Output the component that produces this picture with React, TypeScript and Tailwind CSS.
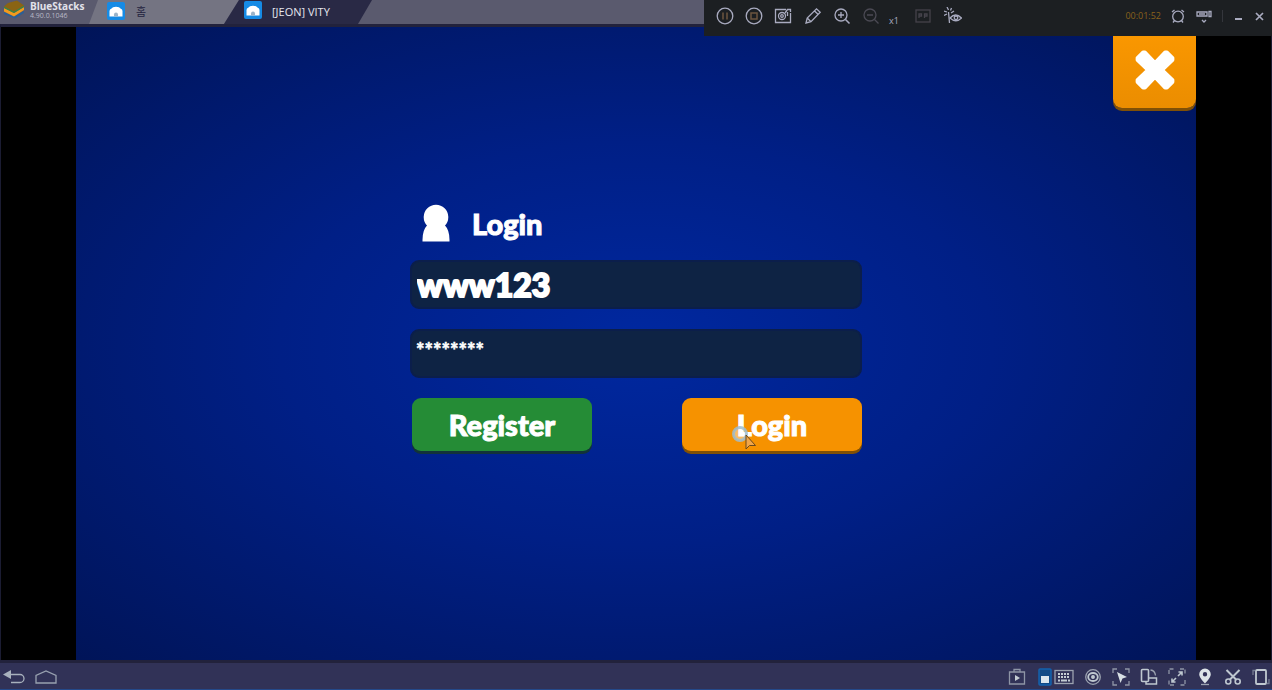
import React from "react";

type IconProps = { w: number; h: number; label: string; className?: string; children: React.ReactNode };

function Tool({ w, h, label, className = "", children }: IconProps) {
  return (
    <button type="button" aria-label={label} className={`flex shrink-0 items-center justify-center ${className}`}>
      <svg width={w} height={h} viewBox={`0 0 ${w} ${h}`} fill="none" stroke="currentColor" strokeWidth="1.3">
        {children}
      </svg>
    </button>
  );
}

function HomeBadge() {
  return (
    <svg width="18" height="18" viewBox="0 0 18 18" className="shrink-0">
      <rect width="18" height="18" rx="2" fill="#168be5" />
      <path d="M2.500 14.500V9Q2.500 7.200 4.500 6.500L6 5.200Q9 4.200 12 5.200L13.500 6.500q2 .7 2 2.500V14.500Z" fill="#fff" />
      <path d="M7 14.500v-2a2 2 0 0 1 4 0V14.500Z" fill="#9cb4c8" />
    </svg>
  );
}

function TitleBar() {
  return (
    <header className="flex h-6 bg-[#5a5a6e] font-['Open_Sans',sans-serif]">
      <div className="z-10 -mr-2 flex w-[97px] shrink-0 items-start">
        <svg width="30" height="20" viewBox="0 0 30 20" className="shrink-0">
          <path d="M4 12l10 4 10-5v2l-9 5.500L4 14Z" fill="#2b5f96" />
          <path d="M4 8l10 5 10-6v3l-10 6.500L4 11.500Z" fill="#f39a1d" />
          <path d="M4 6.500l10 5 10-6v1.500l-10 6L4 8Z" fill="#3a8a3d" />
          <path d="M4 6.500L8 3l9-2.500L24 5.500l-10 6Z" fill="#8a6414" />
        </svg>
        <div className="text-[#e2e2ea]">
          <div className="text-[10px] leading-[13px] font-bold">BlueStacks</div>
          <div className="text-[7px] leading-[6px] text-[#b9b9c6]">4.90.0.1046</div>
        </div>
      </div>
      <a href="#home" className="flex w-[150px] shrink-0 items-start gap-[11px] bg-[#747482] pt-[2px] pl-[18px] [clip-path:polygon(9px_0,100%_0,calc(100%-15px)_100%,0_100%)]">
        <HomeBadge />
        <span className="font-['Noto_Sans_CJK_KR',sans-serif] text-[11px] leading-[18px] text-[#23233f]">홈</span>
      </a>
      <a href="#vity" className="-ml-[15px] flex w-[148px] shrink-0 items-start gap-[10px] bg-[#292945] pt-[1px] pl-5 [clip-path:polygon(15px_0,100%_0,calc(100%-14px)_100%,0_100%)]">
        <HomeBadge />
        <span className="text-[11px] leading-[22px] whitespace-nowrap text-[#e6e6ee]">[JEON] VITY</span>
      </a>
    </header>
  );
}

function Recorder() {
  return (
    <div className="absolute top-0 right-0 flex h-9 w-[568px] items-center justify-between bg-[#1c1f22] pb-1 text-[#a9abc0]">
      <div className="flex items-center pl-[6px]">
        <Tool w={18} h={18} label="Pause" className="w-[29px]">
          <circle cx="9" cy="9" r="7.800" />
          <path d="M7 5.500v7M11 5.500v7" stroke="#6c553f" strokeWidth="1.500" />
        </Tool>
        <Tool w={18} h={18} label="Stop" className="w-[29px]">
          <circle cx="9" cy="9" r="7.800" />
          <rect x="6" y="6" width="6" height="6" stroke="#6c553f" strokeWidth="1.500" />
        </Tool>
        <Tool w={18} h={18} label="Capture" className="w-[30px]">
          <path d="M12 2.500H1.500v13h15V6" /><circle cx="8" cy="9" r="3.500" /><circle cx="8" cy="9" r="1.300" />
          <path d="M11 6l2.500-3.500h3V5M13.500 5v4" />
        </Tool>
        <Tool w={18} h={18} label="Draw" className="w-[29px]">
          <path d="M2 16l1.200-5L12.500 1.800l3.700 3.500L7 14.700ZM10.500 4l3.500 3.300M3.200 11l3.800 3.700" />
        </Tool>
        <Tool w={18} h={18} label="Zoom in" className="w-[29px]">
          <circle cx="8" cy="8" r="6" /><path d="M8 5v6M5 8h6" /><path d="M12.500 12.500l4 4" strokeWidth="1.600" />
        </Tool>
        <Tool w={18} h={18} label="Zoom out" className="w-[30px] text-[#4b4a54]">
          <circle cx="8" cy="8" r="6" /><path d="M5 8h6M12.500 12.500l4 4" />
        </Tool>
        <span className="w-[16px] pt-[10px] text-center font-['Open_Sans',sans-serif] text-[9px] leading-3">x1</span>
        <Tool w={16} h={14} label="Playback" className="w-[41px] text-[#45434b]">
          <rect x="1" y="1" width="14" height="12" /><path d="M4 9V5h2.500v2H4M9.500 9V5H12v2H9.500" />
        </Tool>
        <Tool w={18} h={18} label="Effects" className="w-[20px]">
          <path d="M4.500 5l1 11M0 4l3 1M3 0l1.500 3M7.500 1L6.500 3.500M0 8.500L3 7M7 6l3-2" />
          <path d="M6 11q5.500-6 11.500 0Q12 16.500 6 11Z" /><circle cx="12" cy="10.800" r="1.800" />
        </Tool>
      </div>
      <div className="flex items-center pr-2">
        <time className="mr-[10px] font-['Open_Sans',sans-serif] text-[9px] leading-4 text-[#8a621c]">00:01:52</time>
        <Tool w={14} h={14} label="Timer" className="w-[14px]">
          <circle cx="7" cy="7.500" r="5.300" /><path d="M1 3l2.500-2M13 3l-2.500-2M3.500 11.500L2 13.500M10.500 11.500L12 13.500" />
        </Tool>
        <Tool w={16} h={14} label="Webcam" className="ml-[11px] w-4">
          <path d="M1 3h10v4H1ZM3 5h6" /><path d="M13 2.500h2v5h-2Z" /><path d="M6 11l2 2 2-2" />
        </Tool>
        <span className="ml-[10px] h-3 w-px bg-[#34363c]" />
        <Tool w={8} h={12} label="Minimize" className="ml-[12px]"><path d="M0 9h7" strokeWidth="2" /></Tool>
        <Tool w={9} h={9} label="Close recorder" className="ml-[12px]"><path d="M1 1l7 7M8 1L1 8" strokeWidth="1.700" /></Tool>
      </div>
    </div>
  );
}

function LoginForm() {
  return (
    <form onSubmit={(e) => e.preventDefault()} className="w-[452px] font-['Lato',sans-serif] font-black text-white">
      <div className="flex h-[57px] items-start pt-px pl-3">
        <svg width="28" height="38" viewBox="0 0 28 38" fill="#fff">
          <path d="M5 21.500A12.300 12.300 0 1 1 23 21.500Q27.500 26 27.500 36V37.500H.5V36Q.5 26 5 21.500Z" />
        </svg>
        <h1 className="ml-[22px] pt-[2px] text-[29px] leading-9 [-webkit-text-stroke:1px_white]">Login</h1>
      </div>
      <input
        aria-label="Username"
        defaultValue="www123"
        className="mb-5 block h-[49px] w-full rounded-[9px] border-2 border-[#0b1e4b] bg-[#0e2344] px-[5px] text-[32px] leading-10 outline-none [-webkit-text-stroke:2px_white]"
      />
      <input
        aria-label="Password"
        defaultValue="********"
        className="mb-5 block h-[49px] w-full rounded-[9px] border-2 border-[#0b1e4b] bg-[#0e2344] px-1 pb-[6px] text-[20px] leading-5 outline-none [-webkit-text-stroke:0.5px_white]"
      />
      <div className="flex justify-between pl-[2px]">
        <button type="submit" name="register" className="h-[53px] w-[180px] rounded-[9px] bg-[#258c36] pt-[2px] text-[29px] leading-9 shadow-[0_3px_0_#12333a] [-webkit-text-stroke:1px_white]">
          Register
        </button>
        <button type="submit" name="login" className="relative h-[53px] w-[180px] rounded-[9px] bg-[#f69200] pt-[2px] text-[29px] leading-9 shadow-[0_3px_0_#805006] [-webkit-text-stroke:1px_white]">
          Login
          <svg width="26" height="26" viewBox="0 0 26 26" className="absolute top-[27px] left-[49px]">
            <circle cx="9" cy="9" r="6.500" fill="#fff" fillOpacity=".4" stroke="#9dbdd0" strokeOpacity=".85" strokeWidth="3" />
            <path d="M15 10v14l3.500-3.500 6 0Z" fill="#f1a64a" stroke="#6b4a1c" strokeWidth="1" />
          </svg>
        </button>
      </div>
    </form>
  );
}

function BottomBar() {
  return (
    <footer className="flex h-[30px] items-center justify-between border-t-[3px] border-b border-t-[#22223c] border-b-[#24498a] bg-[#313257] pt-[2px] text-[#bfc8d0]">
      <div className="flex items-center gap-[10px] pl-[3px]">
        <Tool w={22} h={14} label="Back" className="text-[#a8b1bd]">
          <path d="M7 4.500h10a4 4 0 0 1 0 8H8" /><path d="M0 4.500L8 0v9Z" fill="currentColor" stroke="none" />
        </Tool>
        <Tool w={22} h={14} label="Home" className="text-[#98a1b0]"><path d="M1 13V5.500L11 1l10 4.500V13Z" /></Tool>
      </div>
      <div className="flex items-center pr-[2px]">
        <Tool w={18} h={18} label="Media manager" className="mr-[12px] text-[#8e95a6]">
          <path d="M1.500 4h15v12h-15ZM6 4V1.500h6V4" /><path d="M7 7l5 3-5 3Z" fill="#c4ccd3" stroke="none" />
        </Tool>
        <Tool w={14} h={18} label="Input mode">
          <rect x="1" y="1" width="12" height="16" rx="1" fill="#124a86" stroke="#1561ad" strokeWidth="1.500" />
          <path d="M3 8h8v7H3Z" fill="#dce6ed" stroke="none" />
        </Tool>
        <Tool w={20} h={16} label="Keyboard" className="mr-[5px] ml-[2px] text-[#9ba2b0]">
          <rect x="1" y="1.500" width="18" height="13" /><path d="M4 5h12M4 8h12" stroke="#c4ccd3" strokeWidth="2" strokeDasharray="2 1" /><path d="M4 11.500h12" stroke="#c4ccd3" strokeWidth="2" strokeDasharray="2 1 6 1" />
        </Tool>
        <Tool w={18} h={18} label="Visibility" className="w-7">
          <circle cx="9" cy="9" r="7.300" stroke="#9ba2b0" /><ellipse cx="9" cy="9" rx="4.800" ry="4" strokeWidth="1.800" /><circle cx="9" cy="9" r="1.300" fill="currentColor" />
        </Tool>
        <Tool w={18} h={18} label="Cursor lock" className="w-7">
          <path d="M1 5V1h4M13 1h4v4M17 13v4h-4M5 17H1v-4" stroke="#8e95a6" /><path d="M5 4l10 5-4.500 1.500L8.500 15Z" fill="#d7dfe4" stroke="none" />
        </Tool>
        <Tool w={18} h={18} label="Rotate" className="w-7">
          <rect x="1.500" y="1.500" width="7" height="12" rx="1" strokeWidth="1.600" /><path d="M9 10h7.500v6H6v-2.500" strokeWidth="1.500" /><path d="M10.500 2q4.500 .5 5 5.500" stroke="#9ba2b0" />
        </Tool>
        <Tool w={18} h={18} label="Full screen" className="w-7">
          <path d="M1 6V1h5M12 1h5v5M17 12v5h-5M6 17H1v-5" stroke="#8e95a6" strokeDasharray="4 1.500" /><path d="M10 8l4-4M10.500 4H14v3.500M8 10l-4 4M4 10.500V14h3.500" strokeWidth="1.600" />
        </Tool>
        <Tool w={16} h={18} label="Location" className="w-7">
          <path d="M8 0.500a5.800 5.800 0 0 0-5.800 5.800C2.200 10 8 15.500 8 15.500s5.800-5.500 5.800-9.200A5.800 5.800 0 0 0 8 .5Zm0 3.500a2.200 2.200 0 1 1 0 4.400 2.200 2.200 0 0 1 0-4.400Z" fill="#dce3e7" fillRule="evenodd" stroke="none" /><path d="M4 16.500h8" stroke="#9ba2b0" />
        </Tool>
        <Tool w={18} h={18} label="Screenshot" className="w-7">
          <path d="M2.500 2l10 10M15.500 2L5.500 12" strokeWidth="2" /><circle cx="4.300" cy="13.500" r="2.500" strokeWidth="1.600" /><circle cx="13.700" cy="13.500" r="2.500" strokeWidth="1.600" />
        </Tool>
        <Tool w={18} h={18} label="Shake" className="ml-[5px]">
          <rect x="4" y="2" width="10" height="14" rx="1" strokeWidth="1.800" /><path d="M1 7V2.500h2M17 11v4.500h-2" stroke="#747b91" />
        </Tool>
      </div>
    </footer>
  );
}

export default function App() {
  return (
    <div className="relative flex min-h-screen flex-col">
      <TitleBar />
      <main className="flex flex-1 border-x border-t-[3px] border-x-[#1b1c32] border-t-[#22223c] bg-black px-[75px]">
        <section className="relative flex flex-1 items-center justify-center bg-[radial-gradient(ellipse_at_center,#0028a0_0%,#001f86_45%,#001458_100%)] pb-[34px]">
          <LoginForm />
          <button type="button" aria-label="Close" className="absolute top-2 right-0 flex h-[73px] w-[83px] items-center justify-center rounded-b-[9px] bg-linear-to-b from-[#fa9700] to-[#eb8d00] pb-1 shadow-[0_3px_0_#805006]">
            <svg width="44" height="44" viewBox="0 0 42 42">
              <path d="M8 8l26 26M34 8L8 34" stroke="#fff" strokeWidth="12" />
              <path d="M4 9.500L9.500 4h2L21 14 30.500 4h2L38 9.500v2L28 21 38 30.500v2L32.500 38h-2L21 28 11.500 38h-2L4 32.500v-2L14 21 4 11.500Z" fill="#fff" stroke="#fff" strokeWidth="3" strokeLinejoin="round" />
            </svg>
          </button>
        </section>
      </main>
      <BottomBar />
      <Recorder />
    </div>
  );
}
